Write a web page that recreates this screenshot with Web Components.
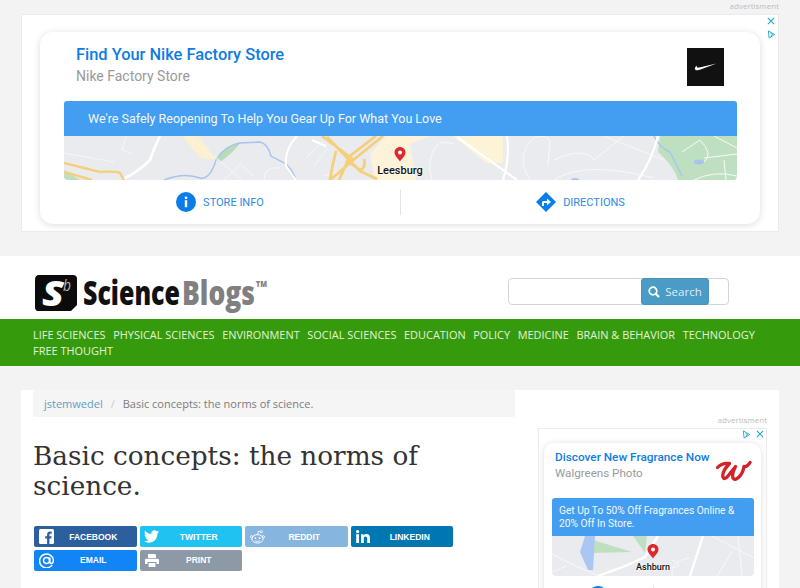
<!DOCTYPE html>
<html lang="en">
<head>
<meta charset="utf-8">
<title>Basic concepts: the norms of science.</title>
<style>
  html, body { margin: 0; height: 588px; overflow: hidden; }
  body { background: #f3f3f3; font-family: "Open Sans", sans-serif; }
  .top-ad { display: block; padding: 0 21px 24px; }
  .content { display: grid; grid-template-columns: 494px 264px; margin: 24px 21px 0; }
</style>
</head>
<body>
<section class="top-ad">
  <sb-ad-label>advertisment</sb-ad-label>
  <sb-ad-box>
    <sb-ad-marks slot="marks"></sb-ad-marks>
    <sb-ad-card>
      <span slot="title">Find Your Nike Factory Store</span>
      <span slot="sub">Nike Factory Store</span>
      <svg slot="logo" width="37" height="38" viewBox="0 0 37 38">
        <rect width="37" height="38" fill="#111"/>
        <path d="M29.5 15.5 L13.5 21.6 C10.5 22.7 8.2 22.6 7.9 20.7 C7.8 19.6 8.6 18.5 9.7 17.4 C9.2 19.4 10.8 20 13.4 19.3 Z" fill="#fff"/>
      </svg>
      <span slot="banner">We're Safely Reopening To Help You Gear Up For What You Love</span>
      <sb-map-leesburg slot="map"></sb-map-leesburg>
      <sb-ad-action slot="left" icon="info">STORE INFO</sb-ad-action>
      <sb-ad-action slot="right" icon="directions">DIRECTIONS</sb-ad-action>
    </sb-ad-card>
  </sb-ad-box>
</section>

<sb-header></sb-header>
<sb-nav>
  <a>Life Sciences</a><a>Physical Sciences</a><a>Environment</a><a>Social Sciences</a><a>Education</a><a>Policy</a><a>Medicine</a><a>Brain &amp; Behavior</a><a>Technology</a><a>Free Thought</a>
</sb-nav>

<div class="content">
  <sb-article>
    <sb-breadcrumb slot="crumbs" parent="jstemwedel">Basic concepts: the norms of science.</sb-breadcrumb>
    <span slot="title">Basic concepts: the norms of science.</span>
    <sb-share-button slot="share" icon="facebook" color="#2c5f9e">Facebook</sb-share-button>
    <sb-share-button slot="share" icon="twitter" color="#1fc2f1">Twitter</sb-share-button>
    <sb-share-button slot="share" icon="reddit" color="#86b5df">Reddit</sb-share-button>
    <sb-share-button slot="share" icon="linkedin" color="#0077b0">LinkedIn</sb-share-button>
    <sb-share-button slot="share" icon="email" color="#1184f6">Email</sb-share-button>
    <sb-share-button slot="share" icon="print" color="#8d99a6">Print</sb-share-button>
  </sb-article>
  <sb-sidebar>
    <sb-ad-label>advertisment</sb-ad-label>
    <sb-ad-box small>
      <sb-ad-marks slot="marks" row></sb-ad-marks>
      <sb-ad-card small>
        <span slot="title">Discover New Fragrance Now</span>
        <span slot="sub">Walgreens Photo</span>
        <svg slot="logo" width="36" height="24" viewBox="0 0 36 24" fill="none">
          <path d="M1.5 7.5 Q6 2.5 13.5 3.5 Q5.5 12 7 17 Q8.5 20.5 12 16 L19.5 6.5 Q15.5 14 17 18 Q19 21 23 17 Q27 13 28 6.5 Q31 7.5 34 2.5" stroke="#d2232a" stroke-width="3.3" stroke-linecap="round" stroke-linejoin="round"/>
        </svg>
        <span slot="banner">Get Up To 50% Off Fragrances Online &amp; 20% Off In Store.</span>
        <sb-map-ashburn slot="map"></sb-map-ashburn>
        <sb-ad-action slot="left" icon="info"></sb-ad-action>
        <sb-ad-action slot="right" icon="directions"></sb-ad-action>
      </sb-ad-card>
    </sb-ad-box>
  </sb-sidebar>
</div>

<script>
"use strict";

(() => {
  const ICONS = {
    info: `<svg width="20" height="20" viewBox="0 0 20 20"><circle cx="10" cy="10" r="10" fill="#0b7de8"/><circle cx="10" cy="5.8" r="1.4" fill="#fff"/><rect x="8.8" y="8.2" width="2.4" height="7" fill="#fff"/></svg>`,
    directions: `<svg width="20" height="20" viewBox="0 0 20 20"><path d="M10 0 L20 10 L10 20 L0 10 Z" fill="#0b7de8"/><path d="M6 14 V10.5 Q6 9 7.5 9 H11 V6.6 L15 10 L11 13.2 V10.9 H8 V14 Z" fill="#fff"/></svg>`,
    facebook: `<svg width="15" height="15" viewBox="0 0 15 15"><rect width="15" height="15" rx="1.5" fill="#fff"/><path d="M10.4 15 V9.4 H12.3 L12.6 7.2 H10.4 V5.8 C10.4 5.1 10.6 4.7 11.5 4.7 H12.7 V2.7 C12.4 2.7 11.8 2.6 11 2.6 C9.3 2.6 8.1 3.6 8.1 5.5 V7.2 H6.2 V9.4 H8.1 V15 Z" fill="#2c5f9e"/></svg>`,
    twitter: `<svg width="15" height="13" viewBox="0 0 24 20"><path d="M24 2.4 C23.1 2.8 22.2 3 21.2 3.2 C22.2 2.6 23 1.6 23.4 0.4 C22.4 1 21.4 1.4 20.2 1.6 C19.3 0.6 18 0 16.6 0 C13.9 0 11.7 2.2 11.7 4.9 C11.7 5.3 11.8 5.7 11.8 6 C7.7 5.8 4.1 3.8 1.7 0.9 C1.2 1.6 1 2.5 1 3.4 C1 5.1 1.9 6.6 3.2 7.5 C2.4 7.5 1.6 7.3 1 6.9 V7 C1 9.4 2.7 11.4 4.9 11.8 C4.1 12 3.3 12.1 2.6 11.9 C3.2 13.9 5.1 15.3 7.2 15.4 C5 17.1 2.4 17.9 0 17.6 C2.2 19 4.8 19.8 7.5 19.8 C16.6 19.8 21.5 12.3 21.5 5.8 V5.2 C22.5 4.5 23.3 3.5 24 2.4 Z" fill="#fff"/></svg>`,
    reddit: `<svg width="15" height="14" viewBox="0 0 15 14" fill="none" stroke="#fff"><ellipse cx="7.5" cy="8.8" rx="5.6" ry="4.2" stroke-width="1"/><circle cx="1.6" cy="6.8" r="1.2" stroke-width=".8"/><circle cx="13.4" cy="6.8" r="1.2" stroke-width=".8"/><circle cx="11.4" cy="1.7" r="1.1" stroke-width=".8"/><path d="M7.5 4.6 L8.4 1.2 L10.4 1.7" stroke-width=".8"/><circle cx="5.4" cy="8.2" r=".9" fill="#fff" stroke="none"/><circle cx="9.6" cy="8.2" r=".9" fill="#fff" stroke="none"/><path d="M5.2 10.8 Q7.5 12.2 9.8 10.8" stroke-width=".8"/></svg>`,
    linkedin: `<svg width="14" height="13" viewBox="0 0 14 13"><circle cx="1.6" cy="1.6" r="1.6" fill="#fff"/><rect x=".2" y="4.2" width="2.8" height="8.8" fill="#fff"/><path d="M5 4.2 H7.6 V5.5 C8.1 4.6 9.1 4 10.4 4 C13 4 14 5.6 14 8.2 V13 H11.2 V8.8 C11.2 7.6 10.8 6.6 9.6 6.6 C8.4 6.6 7.8 7.5 7.8 8.8 V13 H5 Z" fill="#fff"/></svg>`,
    email: `<svg width="15" height="15" viewBox="0 0 15 15" fill="none" stroke="#fff" stroke-width="1.5"><path d="M13.2 11.9 A6.9 6.9 0 1 1 14.4 7.5 C14.4 9.4 13.6 10.4 12.4 10.4 C11.4 10.4 10.8 9.7 10.8 8.8 V4.4"/><circle cx="7.5" cy="7.5" r="3"/></svg>`,
    print: `<svg width="14" height="13" viewBox="0 0 14 13"><path d="M3 0 H10 L11 1 V4 H3 Z M0 6 Q0 4.7 1.3 4.7 H12.7 Q14 4.7 14 6 V10 H11.4 V8 H2.6 V10 H0 Z M3.6 9 H10.4 V13 H3.6 Z" fill="#fff"/></svg>`
  };

  const PIN = (x, y) => `<path transform="translate(${x - 5.5} ${y - 7})" d="M5.5 0 C2.5 0 0 2.4 0 5.4 C0 9 4 11.6 5.5 14.5 C7 11.6 11 9 11 5.4 C11 2.4 8.5 0 5.5 0 Z" fill="#dc2a2f"/><circle cx="${x}" cy="${y - 1.6}" r="2" fill="#fff"/>`;

  customElements.define("sb-ad-label", class extends HTMLElement {
    constructor() {
      super();
      this.attachShadow({mode: "open"}).innerHTML = `
      <style>
      :host {
        display: block;
        height: 14px;
        line-height: 11px;
        text-align: right;
        font-family: "Open Sans", sans-serif;
        font-size: 8px;
        color: #bdbdbd;
      }
      </style>
      <slot></slot>`;
    }
  });

  customElements.define("sb-ad-box", class extends HTMLElement {
    constructor() {
      super();
      this.attachShadow({mode: "open"}).innerHTML = `
      <style>
      :host {
        display: block;
        position: relative;
        background: #fff;
        outline: 1px solid #ebebeb;
        outline-offset: -1px;
        padding: 18px 19px 8px;
      }
      :host([small]) {
        padding: 15px 6px 0;
      }
      </style>
      <slot name="marks"></slot>
      <slot></slot>`;
    }
  });

  customElements.define("sb-ad-marks", class extends HTMLElement {
    constructor() {
      super();
      this.attachShadow({mode: "open"}).innerHTML = `
      <style>
      :host {
        display: flex;
        flex-direction: column;
        gap: 5px;
        position: absolute;
        top: 3px;
        right: 3px;
      }
      :host([row]) {
        flex-direction: row-reverse;
        gap: 5px;
        top: 2px;
        right: 3px;
      }
      svg { display: block; }
      </style>
      <svg width="8" height="8" viewBox="0 0 9 9"><path d="M1 1 L8 8 M8 1 L1 8" stroke="#22a7c2" stroke-width="1.2"/></svg>
      <svg width="9" height="9" viewBox="0 0 9 10" fill="none"><path d="M1 1 L8 5 L1.8 9 Z M3.4 3.6 L5.8 5 L3.6 6.6" stroke="#22a7c2" stroke-width="1"/></svg>`;
    }
  });

  customElements.define("sb-ad-card", class extends HTMLElement {
    constructor() {
      super();
      this.attachShadow({mode: "open"}).innerHTML = `
      <style>
      :host {
        display: block;
        background: #fff;
        border-radius: 13px;
        box-shadow: 0 1px 7px rgba(0, 0, 0, 0.14);
        font-family: Roboto, sans-serif;
      }
      #head {
        display: flex;
        justify-content: space-between;
        height: 69px;
        box-sizing: border-box;
        padding: 14px 36px 0 36px;
      }
      #title { font-size: 16.4px; font-weight: 500; line-height: 18px; color: #0f7ce2; }
      #sub { font-size: 14px; line-height: 16px; margin-top: 4px; color: #9a9a9a; }
      #logo { padding-top: 2px; }
      #banner {
        margin: 0 23px 0 24px;
        background: #439ef2;
        color: #f2f8fe;
        border-radius: 3px 3px 0 0;
        height: 35px;
        line-height: 35px;
        font-size: 12.5px;
        padding: 0 24px;
      }
      #map { margin: 0 23px 0 24px; height: 44px; overflow: hidden; border-radius: 0 0 4px 4px; }
      #actions {
        display: grid;
        grid-template-columns: 1fr 1fr;
        align-items: center;
        height: 44px;
        position: relative;
      }
      #actions > div { display: flex; justify-content: center; }
      #actions > div + div { border-left: 1px solid #e3e3e3; height: 25px; align-items: center; }

      :host([small]) { border-radius: 10px; }
      :host([small]) #head { height: 55px; padding: 6px 10px 0 11px; }
      :host([small]) #title { font-size: 11.8px; line-height: 16px; white-space: nowrap; }
      :host([small]) #sub { font-size: 11.6px; line-height: 14px; margin-top: 1px; }
      :host([small]) #logo { padding-top: 11px; margin-left: 6px; }
      :host([small]) #banner {
        margin: 0 7px 0 8px;
        height: 38px;
        line-height: 12.5px;
        font-size: 10.2px;
        padding: 7px 7px 0;
        box-sizing: border-box;
        white-space: normal;
      }
      :host([small]) #map { margin: 0 7px 0 8px; height: 40px; }
      :host([small]) #actions { align-items: start; padding-top: 10px; }
      </style>
      <div id="head">
        <div>
          <div id="title"><slot name="title"></slot></div>
          <div id="sub"><slot name="sub"></slot></div>
        </div>
        <div id="logo"><slot name="logo"></slot></div>
      </div>
      <div id="banner"><slot name="banner"></slot></div>
      <div id="map"><slot name="map"></slot></div>
      <div id="actions">
        <div><slot name="left"></slot></div>
        <div><slot name="right"></slot></div>
      </div>`;
    }
  });

  customElements.define("sb-ad-action", class extends HTMLElement {
    constructor() {
      super();
      this.attachShadow({mode: "open"}).innerHTML = `
      <style>
      :host {
        display: inline-flex;
        align-items: center;
        gap: 7px;
        font-family: Roboto, sans-serif;
        font-size: 11px;
        color: #2b8ae6;
      }
      svg { display: block; }
      </style>
      ${ICONS[this.getAttribute("icon")]}
      <slot></slot>`;
    }
  });

  customElements.define("sb-map-leesburg", class extends HTMLElement {
    constructor() {
      super();
      this.attachShadow({mode: "open"}).innerHTML = `
      <style>
      :host { display: block; position: relative; height: 44px; background: #e9ebee; }
      svg { display: block; }
      span {
        position: absolute;
        left: 336px;
        top: 28px;
        transform: translateX(-50%);
        font-family: Roboto, sans-serif;
        font-size: 11px;
        line-height: 14px;
        font-weight: 500;
        color: #111;
        text-shadow: 0 0 2px #fff, 0 0 2px #fff;
      }
      </style>
      <svg width="673" height="44" viewBox="0 0 673 44" fill="none">
        <path d="M118 0 H135 L152 24 L137 22 Z" fill="#fbf1cf"/>
        <path d="M311 44 L306 18 L322 0 H366 L346 8 L352 44 Z" fill="#fdf3d9"/>
        <path d="M389 0 H439 V27 H422 Z" fill="#fdf3d6"/>
        <path d="M153 22 Q162 8 177 6 Q168 18 156 26 Z" fill="#b8dcb8"/>
        <path d="M596 0 H673 V44 H614 Q610 30 594 16 Z" fill="#bfe0c0"/>
        <path d="M0 34 L16 44 H0 Z" fill="#bfe0c0"/>
        <path d="M100 44 Q120 36 136 42 Q146 44 152 24 Q160 10 176 7 L196 6 Q204 8 207 20 L222 28 Q230 36 232 44" stroke="#a9c4ec" stroke-width="1.4"/>
        <path d="M590 0 Q596 12 606 16 Q612 28 618 40" stroke="#a9c4ec" stroke-width="1.4"/>
        <path d="M96 0 Q90 12 86 24 Q74 36 59 43" stroke="#fff" stroke-width="2.6"/>
        <path d="M233 0 Q220 14 222 30 L232 44 M248 4 L262 10" stroke="#fff" stroke-width="2"/>
        <path d="M393 1 L453 44 M443 0 Q446 22 439 44 M594 0 Q588 24 574 44" stroke="#fff" stroke-width="2.2"/>
        <path d="M0 17 L50 26 M150 20 L178 44 M160 44 L176 28 L190 40 M62 0 L58 14 L68 18 M124 0 L150 22 M242 22 L258 6 M264 12 L250 30 M200 44 Q200 30 216 32 M260 40 L280 34" stroke="#f5f6f7" stroke-width="1"/>
        <path d="M368 44 Q362 26 372 10 Q378 4 390 8 M466 44 Q450 20 470 2 Q480 -2 486 4 L484 30 M490 24 Q520 10 530 24 Q550 8 560 0 M540 0 L600 24 M490 44 Q520 24 590 42 M630 44 Q650 34 673 40 M618 16 L636 4 M636 4 Q650 18 640 26 M640 22 L673 18 M650 0 L673 12 M660 24 L662 44" stroke="#f7f8f9" stroke-width="1"/>
        <path d="M0 27 L36 36 Q52 35 56 37 L60 44 M0 36 L28 44" stroke="#f5cf7a" stroke-width="2.4"/>
        <path d="M263 1 L296 35 L313 43 M319 0 L293 21 L266 44 M312 0 L286 20 L275 44 M272 15 Q268 30 266 44 M300 23 Q302 32 296 34 L282 24 M258 0 L290 24" stroke="#f5cf7a" stroke-width="2.8"/>
        <ellipse cx="511" cy="44" rx="4" ry="2" fill="#a9c4ec"/>
        <ellipse cx="635" cy="26" rx="5" ry="2.4" fill="#a9c4ec"/>
        ${PIN(336, 18)}
      </svg>
      <span>Leesburg</span>`;
    }
  });

  customElements.define("sb-map-ashburn", class extends HTMLElement {
    constructor() {
      super();
      this.attachShadow({mode: "open"}).innerHTML = `
      <style>
      :host { display: block; position: relative; height: 40px; background: #e9ebee; }
      svg { display: block; }
      span {
        position: absolute;
        left: 101px;
        top: 25px;
        transform: translateX(-50%);
        font-family: Roboto, sans-serif;
        font-size: 9px;
        line-height: 12px;
        font-weight: 500;
        color: #111;
        text-shadow: 0 0 2px #fff, 0 0 2px #fff;
      }
      </style>
      <svg width="202" height="40" viewBox="0 0 202 40" fill="none">
        <path d="M41 4 L80 16 L41 17 Z M81 0 H95 L93 17 Z" fill="#bfe0c0"/>
        <path d="M33 0 H43 L41 34 L36 34 L28 16 Z" fill="#aac6f2"/>
        <path d="M46 40 L71 31 L93 21 L106 0 M138 40 L151 0" stroke="#fff" stroke-width="2.4"/>
        <path d="M0 18 L20 28 L46 40 M0 36 L14 30 M120 40 Q118 24 138 22 M160 0 L202 22 M165 40 L180 16 M120 24 Q134 30 118 32 M186 0 L190 40" stroke="#f7f8f9" stroke-width="1"/>
        ${PIN(101, 15)}
      </svg>
      <span>Ashburn</span>`;
    }
  });

  customElements.define("sb-logo", class extends HTMLElement {
    constructor() {
      super();
      this.attachShadow({mode: "open"}).innerHTML = `
      <style>
      :host { display: block; width: 235px; height: 38px; }
      svg { display: block; overflow: visible; }
      text { font-family: "Open Sans", sans-serif; font-weight: 800; }
      </style>
      <svg width="235" height="38" viewBox="0 0 235 38">
        <path d="M5 0 H39 Q43 0 43 4 V30 L37 36 H4 Q1 36 1 32 V5 Q1 0 5 0 Z" fill="#0b0b0b"/>
        <text data-x="8" data-y="31" data-w="22" font-size="35" font-style="italic" fill="#fff">S</text>
        <text data-x="29" data-y="16" data-w="8" font-size="16" font-style="italic" fill="#b5b5b5" style="font-weight:400">b</text>
        <text data-x="49" data-y="30" data-w="97" font-size="34" fill="#111">Science</text>
        <text data-x="148" data-y="30" data-w="73" font-size="34" fill="#808080">Blogs</text>
        <text data-x="222" data-y="12" data-w="11" font-size="8.5" fill="#808080">TM</text>
      </svg>`;
    }

    connectedCallback() {
      // squeeze each word to the width it has in the logo
      this.shadowRoot.querySelectorAll("text").forEach(t => {
        const scale = t.dataset.w / t.getComputedTextLength();
        t.setAttribute("transform", `translate(${t.dataset.x} ${t.dataset.y}) scale(${scale} 1)`);
      });
    }
  });

  customElements.define("sb-search", class extends HTMLElement {
    constructor() {
      super();
      this.attachShadow({mode: "open"}).innerHTML = `
      <style>
      :host {
        display: flex;
        justify-content: flex-end;
        box-sizing: border-box;
        width: 221px;
        height: 27px;
        background: #fff;
        border: 1px solid #d2d5d8;
        border-radius: 4px;
        padding-right: 19px;
      }
      button {
        display: flex;
        align-items: center;
        justify-content: center;
        gap: 5px;
        width: 68px;
        margin: -1px 0;
        padding: 0;
        border: 1px solid #4a93bb;
        border-radius: 3px;
        background: #4a9bc6;
        color: #dfeef6;
        font: 11.5px "Open Sans", sans-serif;
      }
      svg { display: block; }
      </style>
      <button>
        <svg width="12" height="12" viewBox="0 0 12 12" fill="none" stroke="#fff"><circle cx="5" cy="5" r="3.8" stroke-width="1.7"/><path d="M8 8 L11 11" stroke-width="2.2"/></svg>
        Search
      </button>`;
    }
  });

  customElements.define("sb-header", class extends HTMLElement {
    constructor() {
      super();
      this.attachShadow({mode: "open"}).innerHTML = `
      <style>
      :host {
        display: flex;
        justify-content: space-between;
        box-sizing: border-box;
        height: 63px;
        background: #fff;
        padding: 19px 71px 0 34px;
      }
      </style>
      <sb-logo></sb-logo>
      <div style="margin-top:3px"><sb-search></sb-search></div>`;
    }
  });

  customElements.define("sb-nav", class extends HTMLElement {
    constructor() {
      super();
      this.attachShadow({mode: "open"}).innerHTML = `
      <style>
      :host {
        display: flex;
        flex-wrap: wrap;
        align-content: flex-start;
        column-gap: 7.6px;
        box-sizing: border-box;
        height: 47px;
        padding: 8px 33px 0;
        background: #359a0c;
        color: #e4f3da;
        font-family: "Open Sans", sans-serif;
        font-size: 10.95px;
        line-height: 15.5px;
        text-transform: uppercase;
      }
      </style>
      <slot></slot>`;
    }
  });

  customElements.define("sb-breadcrumb", class extends HTMLElement {
    constructor() {
      super();
      this.attachShadow({mode: "open"}).innerHTML = `
      <style>
      :host {
        display: flex;
        align-items: center;
        height: 27px;
        padding-left: 11px;
        background: #f5f5f5;
        border-radius: 2px;
        font-family: "Open Sans", sans-serif;
        font-size: 11px;
        color: #7c7c7c;
      }
      a { color: #5f9fc2; }
      i { font-style: normal; color: #ccc; padding: 0 8px; }
      </style>
      <a>${this.getAttribute("parent")}</a><i>/</i><slot></slot>`;
    }
  });

  customElements.define("sb-article", class extends HTMLElement {
    constructor() {
      super();
      this.attachShadow({mode: "open"}).innerHTML = `
      <style>
      :host {
        display: block;
        background: #fff;
        padding-left: 12px;
        height: 198px;
      }
      h1 {
        margin: 24px 60px 0 0;
        font-family: "DejaVu Serif", serif;
        font-weight: 400;
        font-size: 26.3px;
        line-height: 30px;
        color: #333;
      }
      #share {
        display: grid;
        grid-template-columns: repeat(4, 102.5px);
        gap: 2.5px 3px;
        margin: 25px 0 0 1px;
      }
      </style>
      <slot name="crumbs"></slot>
      <h1><slot name="title"></slot></h1>
      <div id="share"><slot name="share"></slot></div>`;
    }
  });

  customElements.define("sb-sidebar", class extends HTMLElement {
    constructor() {
      super();
      this.attachShadow({mode: "open"}).innerHTML = `
      <style>
      :host {
        display: block;
        background: #fff;
        padding: 24px 12px 0 23px;
        height: 198px;
      }
      </style>
      <slot></slot>`;
    }
  });

  customElements.define("sb-share-button", class extends HTMLElement {
    constructor() {
      super();
      this.attachShadow({mode: "open"}).innerHTML = `
      <style>
      :host {
        display: flex;
        align-items: center;
        height: 21px;
        border-radius: 2px;
        background: ${this.getAttribute("color")};
        color: #fff;
        font: 700 8.5px "Liberation Sans", sans-serif;
        text-transform: uppercase;
      }
      #icon { display: flex; justify-content: center; width: 24px; flex: none; }
      #text { flex: 1; text-align: center; padding-right: 8px; }
      svg { display: block; }
      </style>
      <div id="icon">${ICONS[this.getAttribute("icon")]}</div>
      <div id="text"><slot></slot></div>`;
    }
  });
})();
</script>
</body>
</html>
